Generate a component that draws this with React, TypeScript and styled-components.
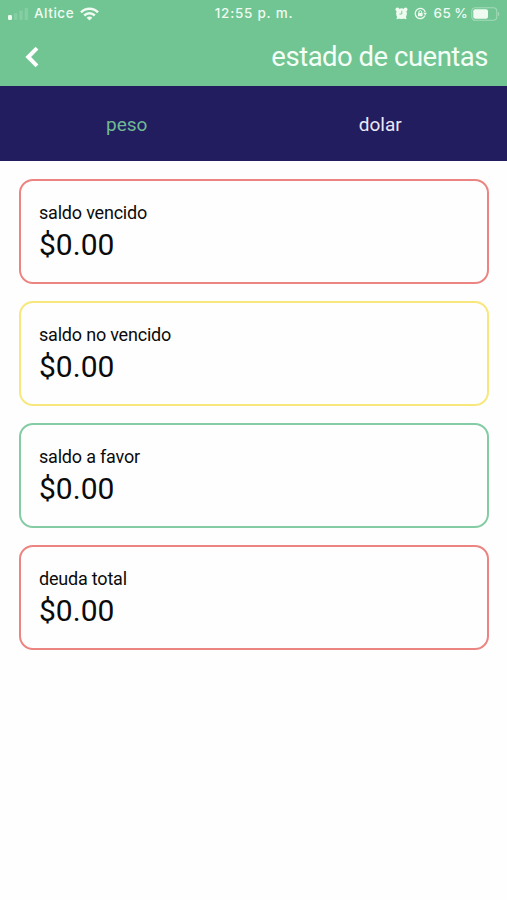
import React from "react";
import styled, { createGlobalStyle } from "styled-components";

const GlobalStyle = createGlobalStyle`
  * { box-sizing: border-box; }
  body { margin: 0; background: #fefefe; }
`;

const Screen = styled.div`
  width: 507px;
  height: 900px;
  display: flex;
  flex-direction: column;
  background: #fefefe;
  font-family: Roboto, "Liberation Sans", sans-serif;
  overflow: hidden;
`;

const StatusBar = styled.div`
  height: 27px;
  flex: none;
  display: grid;
  grid-template-columns: 1fr auto 1fr;
  align-items: center;
  padding: 0 7px 0 8px;
  background: #70c593;
  color: #effbf1;
  font-family: Inter, "Liberation Sans", sans-serif;
  font-size: 13.5px;
  font-weight: 500;
  line-height: 27px;
`;

const StatusGroup = styled.div<{ $end?: boolean }>`
  display: flex;
  align-items: center;
  justify-content: ${(p) => (p.$end ? "flex-end" : "flex-start")};
  white-space: nowrap;
  svg { flex: none; display: block; }
`;

const Carrier = styled.span`
  margin: 0 6px 0 5px;
  letter-spacing: 0.55px;
`;

const Clock = styled.span`
  letter-spacing: 0.75px;
`;

const Percent = styled.span`
  margin: 0 3px 0 7px;
  letter-spacing: 0.4px;
  word-spacing: -1px;
`;

const Header = styled.header`
  height: 59px;
  flex: none;
  display: flex;
  align-items: center;
  justify-content: space-between;
  padding: 0 19px 0 25px;
  background: #70c593;
`;

const BackButton = styled.button`
  padding: 0;
  border: 0;
  background: none;
  svg { display: block; }
`;

const Title = styled.h1`
  margin: 0;
  color: #f4fff6;
  font-size: 27.5px;
  font-weight: 400;
  line-height: 34px;
  letter-spacing: -0.5px;
`;

const Tabs = styled.nav`
  height: 75px;
  flex: none;
  display: grid;
  grid-template-columns: 1fr 1fr;
  background: #221d5e;
`;

const Tab = styled.button<{ $active?: boolean }>`
  padding: 2px 0 0;
  border: 0;
  background: none;
  font: 400 19px/24px Roboto, "Liberation Sans", sans-serif;
  color: ${(p) => (p.$active ? "#70b994" : "#ebe8f6")};
`;

const Cards = styled.main`
  display: flex;
  flex-direction: column;
  gap: 17px;
  padding: 18px 18px 0 19px;
`;

const Card = styled.section<{ $color: string }>`
  height: 105px;
  padding: 20px 18px;
  border: 2px solid ${(p) => p.$color};
  border-radius: 14px;
  color: #0b0b0b;
`;

const Label = styled.div`
  font-size: 18px;
  line-height: 24px;
  letter-spacing: -0.2px;
`;

const Amount = styled.div`
  font-size: 30px;
  line-height: 40px;
`;

const balances = [
  { label: "saldo vencido", amount: "$0.00", color: "#ec8481" },
  { label: "saldo no vencido", amount: "$0.00", color: "#f8e77c" },
  { label: "saldo a favor", amount: "$0.00", color: "#84cca3" },
  { label: "deuda total", amount: "$0.00", color: "#ec8481" },
];

const Signal = () => (
  <svg width="21" height="14" viewBox="0 0 21 14" fill="#effbf1">
    <rect x="0" y="8" width="4" height="5" rx="1.2" />
    <g opacity=".17">
      <rect x="6" y="6" width="3.5" height="7" rx="1" />
      <rect x="11.3" y="3.5" width="3.5" height="9.5" rx="1" />
      <rect x="16.6" y="1" width="3.5" height="12" rx="1" />
    </g>
  </svg>
);

const Wifi = () => (
  <svg width="19" height="14" viewBox="0 0 19 14" fill="none" stroke="#effbf1" strokeWidth="2.5">
    <path d="M1 5.3C5.8 .5 13.2 .5 18 5.3" />
    <path d="M4.2 8.5c3-2.9 7.6-2.9 10.6 0" />
    <path d="M9.5 13.5 6.6 10.7c1.6-1.5 4.2-1.5 5.8 0z" fill="#effbf1" stroke="none" />
  </svg>
);

const Alarm = () => (
  <svg width="13" height="13" viewBox="0 0 13 13">
    <g fill="#effbf1">
      <circle cx="6.5" cy="6.6" r="5.4" />
      <circle cx="2.4" cy="2.4" r="1.9" />
      <circle cx="10.6" cy="2.4" r="1.9" />
      <path d="M2.5 9 1.4 11.8l1.2.5 2.2-1.4zM10.5 9l1.1 2.8-1.2.5-2.2-1.4z" />
    </g>
    <path d="M6.8 3.8v3.2H4.5" fill="none" stroke="#70c593" strokeWidth="0.9" />
  </svg>
);

const RotationLock = () => (
  <svg width="13" height="13" viewBox="0 0 13 13" fill="none" stroke="#effbf1">
    <path d="M11 8.6A5.1 5.1 0 1 1 11.2 5" strokeWidth="1.3" />
    <path d="M9.2 5.8H13l-1.7 2.5z" fill="#effbf1" stroke="none" />
    <rect x="4" y="6" width="4.6" height="3.3" rx=".5" fill="#effbf1" stroke="none" />
    <path d="M4.9 6V5c0-1.8 2.8-1.8 2.8 0v1" strokeWidth="1" />
  </svg>
);

const Battery = () => (
  <svg width="29" height="14" viewBox="0 0 29 14">
    <rect x=".8" y=".7" width="25" height="12.6" rx="3.5" fill="none" stroke="#effbf1" strokeOpacity=".4" strokeWidth="1.1" />
    <rect x="2.3" y="2.3" width="14.7" height="9.4" rx="2" fill="#effbf1" />
    <path d="M27 4.8c1.6.5 1.6 3.9 0 4.4z" fill="#effbf1" opacity=".4" />
  </svg>
);

const StatusIcons = styled.span`
  display: flex;
  gap: 6px;
`;

export default function App() {
  return (
    <>
      <GlobalStyle />
      <Screen>
        <StatusBar>
          <StatusGroup>
            <Signal />
            <Carrier>Altice</Carrier>
            <Wifi />
          </StatusGroup>
          <Clock>12:55 p. m.</Clock>
          <StatusGroup $end>
            <StatusIcons>
              <Alarm />
              <RotationLock />
            </StatusIcons>
            <Percent>65 %</Percent>
            <Battery />
          </StatusGroup>
        </StatusBar>
        <Header>
          <BackButton aria-label="atrás">
            <svg width="14" height="22" viewBox="0 0 14 22" fill="none" stroke="#fff" strokeWidth="4">
              <path d="M12 2.2 3.2 11 12 19.8" />
            </svg>
          </BackButton>
          <Title>estado de cuentas</Title>
        </Header>
        <Tabs>
          <Tab $active>peso</Tab>
          <Tab>dolar</Tab>
        </Tabs>
        <Cards>
          {balances.map((b) => (
            <Card key={b.label} $color={b.color}>
              <Label>{b.label}</Label>
              <Amount>{b.amount}</Amount>
            </Card>
          ))}
        </Cards>
      </Screen>
    </>
  );
}
